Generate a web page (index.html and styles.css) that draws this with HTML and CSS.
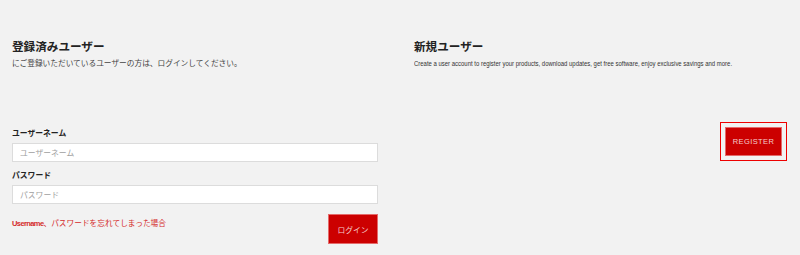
FILE: index.html
```html
<!DOCTYPE html>
<html lang="ja">
<head>
<meta charset="utf-8">
<title>ログイン</title>
<link rel="stylesheet" href="styles.css">
</head>
<body>
<div class="page">
  <div class="head">
    <h2 class="title">登録済みユーザー</h2>
    <p class="lead">にご登録いただいているユーザーの方は、ログインしてください。</p>
  </div>
  <div class="head">
    <h2 class="title">新規ユーザー</h2>
    <p class="lead"><span class="cond">Create a user account to register your products, download updates, get free software, enjoy exclusive savings and more.</span></p>
  </div>
  <form class="login">
    <label class="label" for="u">ユーザーネーム</label>
    <input class="field" id="u" type="text" placeholder="ユーザーネーム">
    <label class="label" for="p">パスワード</label>
    <input class="field" id="p" type="password" placeholder="パスワード">
    <div class="actions">
      <a class="forgot" href="#"><span class="en-b">Username</span>、パスワードを忘れてしまった場合</a>
      <button class="btn login-btn" type="button">ログイン</button>
    </div>
  </form>
  <div class="register">
    <button class="btn reg-btn" type="button">REGISTER</button>
  </div>
</div>
</body>
</html>
```

FILE: styles.css
```css
html, body {
  margin: 0;
  padding: 0;
  background: #f2f2f2;
}
body {
  font-family: "Noto Sans CJK JP", "Noto Sans", sans-serif;
  color: #333;
  overflow: hidden;
}
.page {
  display: grid;
  grid-template-columns: 366px minmax(0, 1fr);
  grid-template-rows: 89px auto;
  column-gap: 36px;
  padding: 38px 14px 0 12px;
}
.head {
  display: flex;
  flex-direction: column;
  min-width: 0;
}
.title {
  margin: 0;
  font-size: 11.6px;
  line-height: 16px;
  font-weight: 700;
  color: #222;
}
.lead {
  margin: 3px 0 0;
  font-size: 7.7px;
  line-height: 12px;
  color: #444;
  white-space: nowrap;
  overflow: hidden;
}
.cond {
  display: inline-block;
  font-family: "Liberation Sans", Arial, sans-serif;
  font-size: 8px;
  color: #333;
  transform: scaleX(0.745);
  transform-origin: left center;
}
.login {
  display: flex;
  flex-direction: column;
  margin: 0;
}
.label {
  font-size: 7.8px;
  line-height: 12px;
  font-weight: 700;
  color: #222;
  margin-bottom: 4px;
}
.field {
  box-sizing: border-box;
  height: 19px;
  width: 366px;
  margin: 0 0 7px;
  padding: 0 7px;
  border: 1px solid #dcdcdc;
  background: #fff;
  font-family: "Noto Sans CJK JP", sans-serif;
  font-size: 7.8px;
  color: #333;
  outline: none;
}
.field::placeholder {
  color: #a0a0a0;
}
.actions {
  display: flex;
  justify-content: space-between;
  align-items: flex-start;
  margin-top: 3px;
}
.forgot {
  margin-top: 3px;
  font-size: 7.7px;
  line-height: 12px;
  color: #d42a2a;
  text-decoration: none;
}
.en-b {
  font-family: "Liberation Sans", Arial, sans-serif;
  font-size: 7.5px;
  font-weight: 700;
  letter-spacing: -0.6px;
}
.btn {
  box-sizing: border-box;
  background: #cc0000;
  border: 1px solid #e46a6a;
  color: #f4cccc;
  font-family: "Noto Sans CJK JP", sans-serif;
  font-size: 7.8px;
  padding: 0;
  cursor: pointer;
}
.login-btn {
  width: 50px;
  height: 30px;
}
.register {
  display: flex;
  justify-content: flex-end;
  align-items: flex-start;
  min-width: 0;
}
.reg-btn {
  width: 57px;
  height: 29px;
  margin-right: 4px;
  outline: 1px solid #ee0000;
  outline-offset: 4px;
  font-family: "Liberation Sans", Arial, sans-serif;
  font-size: 7.5px;
  letter-spacing: 0.4px;
}
```
